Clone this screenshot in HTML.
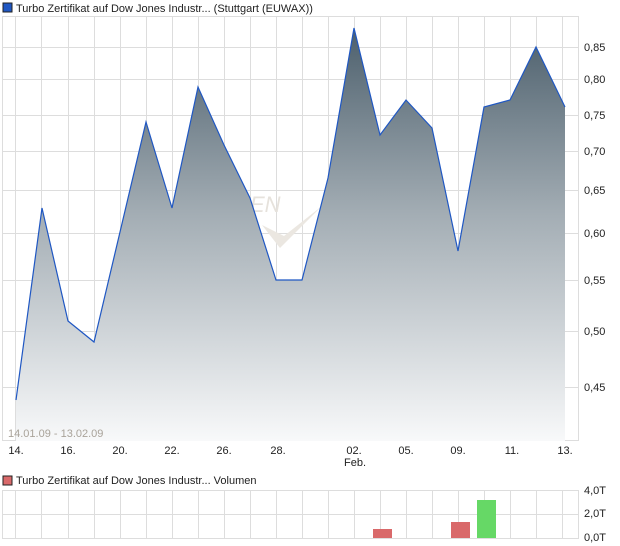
<!DOCTYPE html>
<html><head><meta charset="utf-8"><style>
html,body{margin:0;padding:0;background:#fff;width:620px;height:546px;overflow:hidden}
svg{display:block;font-family:"Liberation Sans",sans-serif}
</style></head><body>
<svg width="620" height="546" viewBox="0 0 620 546" xmlns="http://www.w3.org/2000/svg">
<defs>
<linearGradient id="g" x1="0" y1="28" x2="0" y2="441" gradientUnits="userSpaceOnUse">
<stop offset="0" stop-color="#4c5f6c"/>
<stop offset="0.45" stop-color="#a3adb4"/>
<stop offset="1" stop-color="#f8f9fa"/>
</linearGradient>
</defs>
<rect x="3" y="3" width="9" height="9" fill="#1f57c3" stroke="#222" stroke-width="1"/>
<text x="16" y="12" font-size="11" fill="#222">Turbo Zertifikat auf Dow Jones Industr... (Stuttgart (EUWAX))</text>
<g stroke="#dddddd" stroke-width="1" fill="none">
<rect x="2.5" y="16.5" width="576" height="424"/>
<path d="M15.5 17V441M41.5 17V441M68.5 17V441M94.5 17V441M120.5 17V441M146.5 17V441M172.5 17V441M198.5 17V441M224.5 17V441M250.5 17V441M276.5 17V441M302.5 17V441M328.5 17V441M354.5 17V441M380.5 17V441M406.5 17V441M432.5 17V441M458.5 17V441M484.5 17V441M510.5 17V441M536.5 17V441M562.5 17V441"/>
<path d="M3 47.5H578M3 79.5H578M3 115.5H578M3 151.5H578M3 190.5H578M3 233.5H578M3 280.5H578M3 331.5H578M3 387.5H578"/>
</g>
<text x="250" y="212" font-size="22" font-style="italic" fill="#e6e2dc">EN</text>
<path d="M262 225 L280 248 L322 206 L284 236 Z" fill="#ebe7e1"/>
<path d="M16 441 L16 400 L42 208 L68 321 L94 342 L120 232 L146 122 L172 208 L198 87 L224 145 L250 198 L276 280 L302 280 L328 178 L354 28 L380 135 L406 100 L432 128 L458 251 L484 107 L510 100 L536 47 L565 107 L565 441 Z" fill="url(#g)"/>
<path d="M16 400 L42 208 L68 321 L94 342 L120 232 L146 122 L172 208 L198 87 L224 145 L250 198 L276 280 L302 280 L328 178 L354 28 L380 135 L406 100 L432 128 L458 251 L484 107 L510 100 L536 47 L565 107" fill="none" stroke="#1f57c3" stroke-width="1.2"/>
<text x="8" y="437" font-size="11" fill="#a9a39a">14.01.09 - 13.02.09</text>
<g font-size="11" fill="#222">
<text x="584" y="51">0,85</text><text x="584" y="83">0,80</text><text x="584" y="119">0,75</text><text x="584" y="155">0,70</text><text x="584" y="194">0,65</text><text x="584" y="237">0,60</text><text x="584" y="284">0,55</text><text x="584" y="335">0,50</text><text x="584" y="391">0,45</text>
</g>
<g font-size="11" fill="#222" text-anchor="middle">
<text x="16" y="454">14.</text><text x="68" y="454">16.</text><text x="120" y="454">20.</text><text x="172" y="454">22.</text><text x="224" y="454">26.</text><text x="278" y="454">28.</text><text x="354" y="454">02.</text><text x="406" y="454">05.</text><text x="458" y="454">09.</text><text x="512" y="454">11.</text><text x="565" y="454">13.</text>
<text x="355" y="466">Feb.</text>
</g>
<rect x="3" y="476" width="9" height="9" fill="#d9696a" stroke="#222" stroke-width="1"/>
<text x="16" y="484" font-size="11" fill="#222">Turbo Zertifikat auf Dow Jones Industr... Volumen</text>
<g stroke="#dddddd" stroke-width="1" fill="none">
<rect x="2.5" y="490.5" width="576" height="48"/>
<path d="M3 514.5H578"/>
<path d="M15.5 491V538M41.5 491V538M68.5 491V538M94.5 491V538M120.5 491V538M146.5 491V538M172.5 491V538M198.5 491V538M224.5 491V538M250.5 491V538M276.5 491V538M302.5 491V538M328.5 491V538M354.5 491V538M380.5 491V538M406.5 491V538M432.5 491V538M458.5 491V538M484.5 491V538M510.5 491V538M536.5 491V538M562.5 491V538"/>
</g>
<rect x="373" y="529" width="19" height="9" fill="#d9696a"/>
<rect x="451" y="522" width="19" height="16" fill="#d9696a"/>
<rect x="477" y="500" width="19" height="38" fill="#66d866"/>
<g font-size="11" fill="#222">
<text x="584" y="494">4,0T</text><text x="584" y="517">2,0T</text><text x="584" y="541">0,0T</text>
</g>
</svg>
</body></html>
